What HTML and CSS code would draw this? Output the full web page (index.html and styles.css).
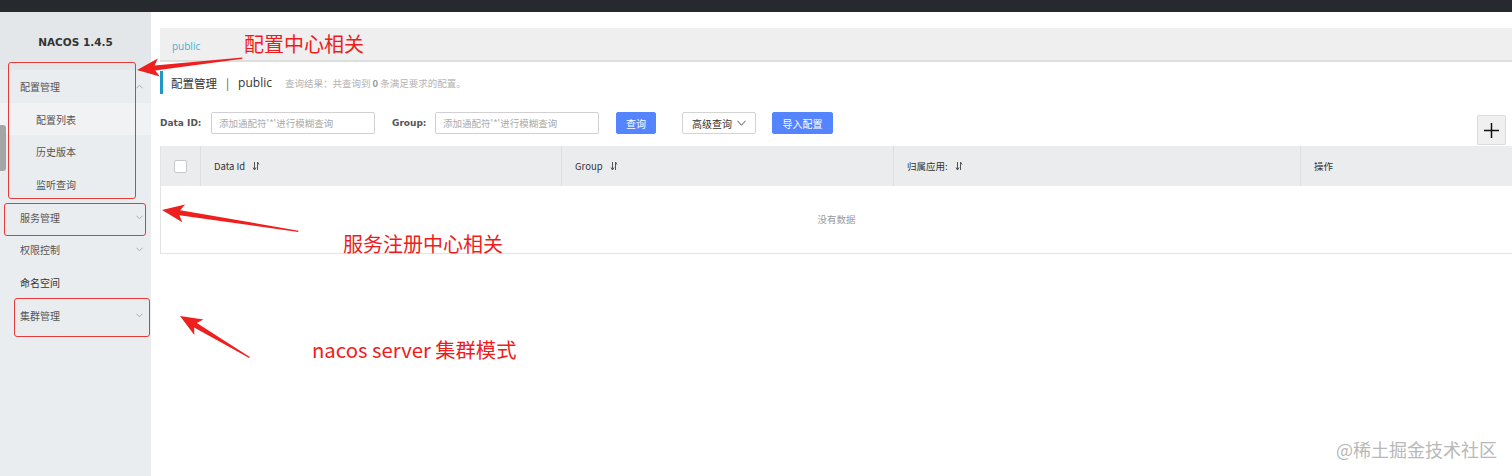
FILE: index.html
```html
<!DOCTYPE html>
<html lang="zh-CN">
<head>
<meta charset="utf-8">
<title>Nacos</title>
<link rel="stylesheet" href="styles.css">
</head>
<body>
<div class="topbar"></div>
<div class="layout">
  <aside class="sidebar">
    <div class="brand">NACOS 1.4.5</div>
    <ul class="menu">
      <li class="item">配置管理<svg class="chev" viewBox="0 0 8 5"><polyline points="0.5,4.5 4,1 7.5,4.5"/></svg></li>
      <li class="item sub active">配置列表</li>
      <li class="item sub">历史版本</li>
      <li class="item sub">监听查询</li>
      <li class="item">服务管理<svg class="chev" viewBox="0 0 8 5"><polyline points="0.5,0.5 4,4 7.5,0.5"/></svg></li>
      <li class="item">权限控制<svg class="chev" viewBox="0 0 8 5"><polyline points="0.5,0.5 4,4 7.5,0.5"/></svg></li>
      <li class="item dark">命名空间</li>
      <li class="item">集群管理<svg class="chev" viewBox="0 0 8 5"><polyline points="0.5,0.5 4,4 7.5,0.5"/></svg></li>
    </ul>
    <div class="scrollthumb"></div>
  </aside>
  <main class="main">
    <div class="crumb"><span class="ns">public</span></div>
    <div class="title">
      <span class="title-main">配置管理</span><span class="sep">|</span><span class="title-ns">public</span>
      <span class="summary">查询结果：共查询到 <b>0</b> 条满足要求的配置。</span>
    </div>
    <div class="filters">
      <label class="flabel">Data ID:</label>
      <div class="input">添加通配符'*'进行模糊查询</div>
      <label class="flabel group">Group:</label>
      <div class="input">添加通配符'*'进行模糊查询</div>
      <button class="btn primary q">查询</button>
      <button class="btn normal adv">高级查询<svg class="dd" viewBox="0 0 10 6"><polyline points="0.5,0.5 5,5.5 9.5,0.5"/></svg></button>
      <button class="btn primary imp">导入配置</button>
      <div class="spacer"></div>
      <button class="plus"><svg viewBox="0 0 16 16"><line x1="8" y1="0" x2="8" y2="16"/><line x1="0" y1="8" x2="16" y2="8"/></svg></button>
    </div>
    <div class="table">
      <div class="thead">
        <div class="th chk"><span class="box"></span></div>
        <div class="th">Data Id<svg class="sort" viewBox="0 0 8 10"><polyline points="1,6.5 2.5,9 4,6.5"/><line x1="2.5" y1="1" x2="2.5" y2="9"/><line x1="5.5" y1="1" x2="5.5" y2="9"/><polyline points="5.5,1 7,3.5"/></svg></div>
        <div class="th">Group<svg class="sort" viewBox="0 0 8 10"><polyline points="1,6.5 2.5,9 4,6.5"/><line x1="2.5" y1="1" x2="2.5" y2="9"/><line x1="5.5" y1="1" x2="5.5" y2="9"/><polyline points="5.5,1 7,3.5"/></svg></div>
        <div class="th">归属应用:<svg class="sort" viewBox="0 0 8 10"><polyline points="1,6.5 2.5,9 4,6.5"/><line x1="2.5" y1="1" x2="2.5" y2="9"/><line x1="5.5" y1="1" x2="5.5" y2="9"/><polyline points="5.5,1 7,3.5"/></svg></div>
        <div class="th last">操作</div>
      </div>
      <div class="tbody">没有数据</div>
    </div>
  </main>
</div>

<div class="mark box1"></div>
<div class="mark box2"></div>
<div class="mark box3"></div>
<svg class="arrows" viewBox="0 0 1512 476">
  <g transform="translate(137,70) rotate(-6.5)">
    <polygon points="0,0 22,-9 18,-2.6 106,-0.4 106,0.8 18,2.6 22,9"/>
  </g>
  <g transform="translate(162,210) rotate(8.8)">
    <polygon points="0,0 22,-9 18,-2.6 138,-0.4 138,0.8 18,2.6 22,9"/>
  </g>
  <g transform="translate(180,316) rotate(30.7)">
    <polygon points="0,0 22,-9 18,-2.6 81,-0.4 81,0.8 18,2.6 22,9"/>
  </g>
</svg>
<div class="note n1">配置中心相关</div>
<div class="note n2">服务注册中心相关</div>
<div class="note n3">nacos server 集群模式</div>
<div class="watermark">@稀土掘金技术社区</div>
</body>
</html>
```

FILE: styles.css
```css
* { box-sizing: border-box; }
html, body { margin: 0; padding: 0; }
body {
  width: 1512px;
  height: 476px;
  overflow: hidden;
  background: #fff;
  font-family: "Noto Sans CJK SC", "Noto Sans", sans-serif;
  color: #333;
  position: relative;
}
.topbar {
  height: 12px;
  background: #262a2f;
}
.layout {
  display: flex;
  height: 464px;
}
.sidebar {
  width: 151px;
  flex: none;
  background: #eaedef;
  position: relative;
}
.brand {
  height: 58px;
  padding-top: 22px;
  text-align: center;
  font-family: "DejaVu Sans", sans-serif;
  font-weight: bold;
  font-size: 10.5px;
  line-height: 16px;
  color: #333;
  background: #e4e7ea;
}
.menu {
  list-style: none;
  margin: 0;
  padding: 0;
}
.item {
  height: 32.7px;
  display: flex;
  align-items: center;
  padding-left: 20px;
  padding-right: 8px;
  font-size: 10px;
  color: #555;
  position: relative;
}
.item.sub { padding-left: 36px; }
.item.active { background: #f1f2f4; }
.item.dark { color: #333; }
.chev {
  width: 7px;
  height: 5px;
  margin-left: auto;
  fill: none;
  stroke: #a0a0a0;
  stroke-width: 1;
}
.scrollthumb {
  position: absolute;
  left: 0;
  top: 113px;
  width: 6px;
  height: 46px;
  border-radius: 0 3px 3px 0;
  background: #a3a5a7;
}
.main {
  flex: 1;
  padding: 16px 0 0 9px;
  min-width: 0;
}
.crumb {
  height: 34px;
  background: #efefef;
  border-bottom: 2px solid #dedede;
  display: flex;
  align-items: center;
  padding-left: 12px;
  padding-top: 4px;
}
.ns {
  font-family: "Open Sans", sans-serif;
  font-size: 10px;
  color: #3db2d4;
}
.title {
  margin-top: 9px;
  height: 23px;
  border-left: 3px solid #2196c9;
  display: flex;
  align-items: center;
  padding-left: 8px;
  font-size: 11.5px;
  color: #333;
}
.sep { margin: 0 9px; color: #555; }
.title-ns { font-family: "Open Sans", sans-serif; font-size: 12px; }
.summary {
  margin-left: 13px;
  font-size: 9.5px;
  color: #b3b3b3;
}
.summary b { color: #999; font-weight: bold; }
.filters {
  margin-top: 18px;
  display: flex;
  align-items: flex-start;
  height: 33px;
}
.flabel {
  font-family: "DejaVu Sans", sans-serif;
  font-weight: bold;
  font-size: 9px;
  color: #555;
  line-height: 22px;
  width: 51px;
}
.flabel.group { width: 43px; margin-left: 17px; }
.input {
  width: 164px;
  height: 22px;
  border: 1px solid #d0d0d0;
  border-radius: 2px;
  padding-left: 7px;
  font-size: 9.5px;
  line-height: 20px;
  color: #aaa;
  background: #fff;
}
.btn {
  height: 22px;
  border-radius: 2px;
  font-family: "Noto Sans CJK SC", sans-serif;
  font-size: 10px;
  padding: 0;
  display: flex;
  align-items: center;
  justify-content: center;
}
.btn.primary {
  background: #5584ff;
  border: 1px solid #5584ff;
  color: #fff;
}
.btn.normal {
  background: #fff;
  border: 1px solid #d3d3d3;
  color: #333;
}
.q { width: 40px; margin-left: 17px; }
.adv { width: 74px; margin-left: 26px; }
.imp { width: 61px; margin-left: 16px; }
.dd {
  width: 9px;
  height: 6px;
  margin-left: 5px;
  fill: none;
  stroke: #444;
  stroke-width: 1;
}
.spacer { flex: 1; }
.plus {
  margin-top: 3px;
  margin-right: 6px;
  width: 29px;
  height: 30px;
  padding: 0;
  background: #f0f0f0;
  border: 1px solid #dcdcdc;
  border-radius: 1px;
  display: flex;
  align-items: center;
  justify-content: center;
}
.plus svg {
  width: 15px;
  height: 15px;
  stroke: #111;
  stroke-width: 1.6;
}
.table {
  margin-top: 1px;
  border-left: 1px solid #e3e3e3;
  border-bottom: 1px solid #e3e3e3;
}
.thead {
  display: grid;
  grid-template-columns: 40px 361px 332px 407px 1fr;
  height: 40px;
  background: #ebecee;
}
.th {
  display: flex;
  align-items: center;
  padding-left: 13px;
  font-size: 9.5px;
  color: #333;
  border-right: 1px solid #dedfe1;
}
.th.last { border-right: none; }
.th.chk { justify-content: center; padding-left: 0; }
.box {
  width: 13px;
  height: 13px;
  background: #fff;
  border: 1px solid #c8c8c8;
  border-radius: 2px;
}
.sort {
  width: 8px;
  height: 10px;
  margin-left: 7px;
  fill: none;
  stroke: #555;
  stroke-width: 1;
}
.tbody {
  height: 67px;
  display: flex;
  align-items: center;
  justify-content: center;
  padding-bottom: 2px;
  font-size: 9.5px;
  color: #999;
}
.mark {
  position: absolute;
  border: 1px solid #e5393a;
  border-radius: 3px;
}
.box1 { left: 8px; top: 62px; width: 128px; height: 137px; }
.box2 { left: 4px; top: 203px; width: 142px; height: 33px; }
.box3 { left: 14px; top: 298px; width: 136px; height: 39px; }
.arrows {
  position: absolute;
  left: 0;
  top: 0;
  width: 1512px;
  height: 476px;
  fill: #ee1f1f;
}
.note {
  position: absolute;
  color: #ee1c1c;
  font-size: 20px;
  line-height: 26px;
  white-space: nowrap;
}
.n1 { left: 244px; top: 31px; }
.n2 { left: 343px; top: 231px; }
.n3 { left: 312px; top: 336px; font-size: 20.3px; }
.watermark {
  position: absolute;
  left: 1336px;
  top: 436px;
  font-size: 18px;
  line-height: 26px;
  color: #b8b8b8;
  white-space: nowrap;
}
```
